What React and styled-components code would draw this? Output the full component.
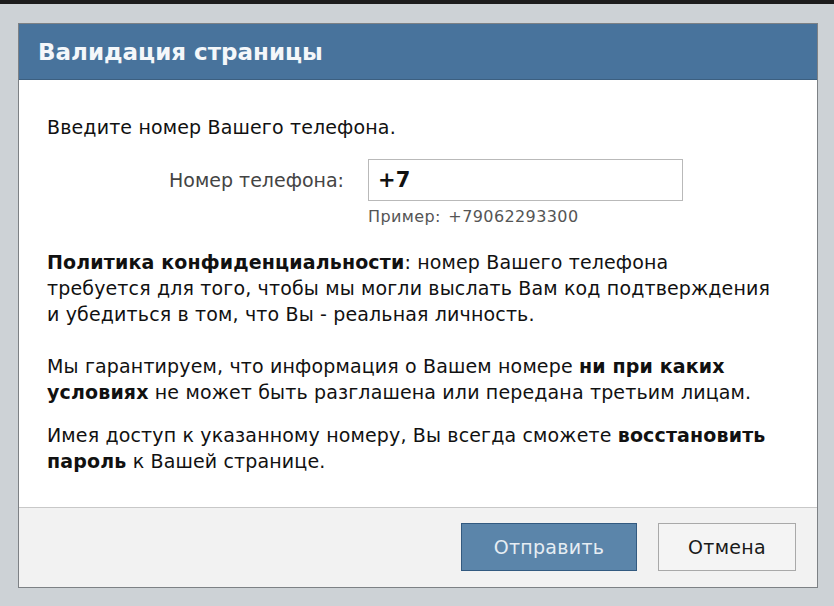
import React from 'react'
import styled, { createGlobalStyle } from 'styled-components'

const GlobalStyle = createGlobalStyle`
  html, body {
    margin: 0;
    padding: 0;
    background: #c9ced3;
  }
  body {
    font-family: "DejaVu Sans", Tahoma, Verdana, sans-serif;
  }
`

const Screen = styled.div`
  width: 834px;
  height: 606px;
  box-sizing: border-box;
  border-top: 4px solid #1c1c1c;
  background: #cdd2d6;
  padding: 19px 16px 0 18px;
  overflow: hidden;
`

const Dialog = styled.div`
  width: 800px;
  height: 565px;
  box-sizing: border-box;
  border: 1px solid #7d8185;
  background: #fff;
  display: flex;
  flex-direction: column;
`

const Header = styled.div`
  height: 56px;
  flex: none;
  background: #48739c;
  border-bottom: 1px solid #3c5f80;
  box-sizing: border-box;
  display: flex;
  align-items: center;
  padding-left: 19px;
`

const Title = styled.h1`
  margin: 0;
  color: #f4f7fa;
  font-size: 23px;
  font-weight: bold;
`

const Body = styled.div`
  flex: 1;
  padding: 34px 16px 0 28px;
  color: #111;
  font-size: 19px;
  line-height: 26px;
  letter-spacing: 0.15px;
`

const Lead = styled.p`
  margin: 0;
`

const FieldRow = styled.div`
  display: flex;
  align-items: center;
  margin-top: 19px;
`

const Label = styled.label`
  width: 321px;
  text-align: right;
  padding-right: 24px;
  box-sizing: border-box;
  color: #444;
  font-size: 19px;
  letter-spacing: 0;
`

const Input = styled.div`
  width: 315px;
  height: 42px;
  box-sizing: border-box;
  border: 1px solid #b9b9b9;
  background: #fff;
  display: flex;
  align-items: center;
  padding-left: 9px;
  font-size: 21px;
  font-weight: bold;
  color: #111;
`

const Hint = styled.div`
  margin: 6px 0 0 321px;
  color: #555;
  font-size: 16px;
  line-height: 20px;
  letter-spacing: 0.4px;
  word-spacing: 2px;
`

const Paragraph = styled.p`
  margin: ${p => p.$top}px 0 0;
`

const Footer = styled.div`
  height: 80px;
  flex: none;
  box-sizing: border-box;
  background: #f2f2f2;
  border-top: 1px solid #c8c8c8;
  display: flex;
  align-items: center;
  justify-content: flex-end;
  gap: 21px;
  padding: 0 21px 1px 0;
`

const Button = styled.button`
  height: 48px;
  width: ${p => p.$w}px;
  box-sizing: border-box;
  font-family: "DejaVu Sans", Tahoma, sans-serif;
  font-size: 19px;
  letter-spacing: 0.3px;
  border: 1px solid ${p => (p.$primary ? '#335a80' : '#a9a9a9')};
  background: ${p => (p.$primary ? '#5b85aa' : '#f4f4f4')};
  color: ${p => (p.$primary ? '#e6edf3' : '#1a1a1a')};
`

export default function App() {
  return (
    <>
      <GlobalStyle />
      <Screen>
        <Dialog>
          <Header>
            <Title>Валидация страницы</Title>
          </Header>
          <Body>
            <Lead>Введите номер Вашего телефона.</Lead>
            <FieldRow>
              <Label>Номер телефона:</Label>
              <Input>+7</Input>
            </FieldRow>
            <Hint>Пример: +79062293300</Hint>
            <Paragraph $top={22}>
              <b>Политика конфиденциальности</b>: номер Вашего телефона
              <br />
              требуется для того, чтобы мы могли выслать Вам код подтверждения
              <br />
              и убедиться в том, что Вы - реальная личность.
            </Paragraph>
            <Paragraph $top={26}>
              Мы гарантируем, что информация о Вашем номере <b>ни при каких</b>
              <br />
              <b>условиях</b> не может быть разглашена или передана третьим лицам.
            </Paragraph>
            <Paragraph $top={17}>
              Имея доступ к указанному номеру, Вы всегда сможете <b>восстановить</b>
              <br />
              <b>пароль</b> к Вашей странице.
            </Paragraph>
          </Body>
          <Footer>
            <Button $primary $w={176}>Отправить</Button>
            <Button $w={138}>Отмена</Button>
          </Footer>
        </Dialog>
      </Screen>
    </>
  )
}
